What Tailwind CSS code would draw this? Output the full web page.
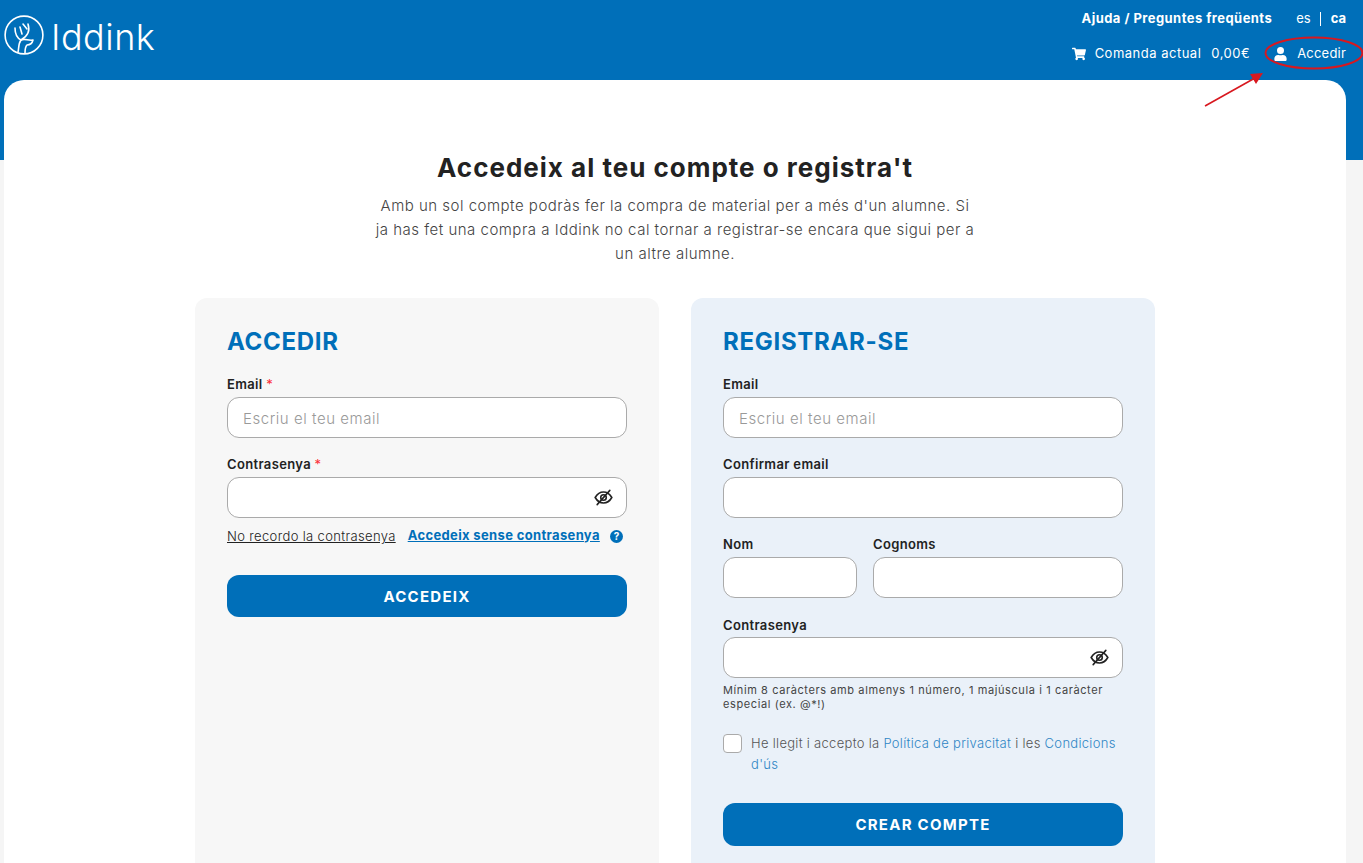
<!DOCTYPE html>
<html lang="ca">
<head>
  <meta charset="UTF-8" />
  <title>Accedir | Iddink</title>
  <meta name="viewport" content="width=device-width, initial-scale=1.0" />
  <script src="https://cdn.jsdelivr.net/npm/@tailwindcss/browser@4"></script>
</head>
<body class="h-[863px] overflow-hidden font-['Inter','Liberation_Sans',sans-serif] text-[#222] bg-[linear-gradient(#006fb9_160px,#f5f5f5_160px)]">

  <!-- Header -->
  <header class="relative h-[80px] flex justify-between text-white pl-[4px] pr-[17px]">
    <a href="#" class="flex items-center h-[70px] gap-[7px]">
      <svg width="40" height="40" viewBox="0 0 40 40" fill="none" stroke="white" stroke-width="1.6" stroke-linecap="round" stroke-linejoin="round">
        <circle cx="20" cy="20" r="18.9" />
        <path d="M11 13C11 19 13 23 17 25M16 12 18 19M24 9C26 15 24 21 17 25M19 9 23 14" />
        <path d="M17 25C21 23 24 26 29 25 28 29 25 30 23 30 21 32 21 35 21 38" />
        <path d="M17 25C14 29 15 34 14 37" />
      </svg>
      <span class="mt-[4px] text-[36px] leading-none font-light tracking-[0.5px]">Iddink</span>
    </a>
    <div class="flex flex-col items-end">
      <div class="flex items-center h-[18px] mt-[10px] text-[13px]">
        <a href="#" class="font-bold tracking-[0.45px]">Ajuda / Preguntes freqüents</a>
        <a href="#" class="ml-[24px]">es</a>
        <span class="w-px h-[14px] bg-white ml-[9px] mr-[10px]"></span>
        <a href="#" class="font-bold">ca</a>
      </div>
      <div class="flex items-center mt-[17px] text-[13px] h-[18px] tracking-[0.5px]">
        <svg width="14" height="14" viewBox="0 0 576 512" fill="white"><path d="M528 301 575 93c3-15-8-29-23-29H159l-9-45C148 8 138 0 127 0H24C11 0 0 11 0 24v16c0 13 11 24 24 24h70l70 343c-17 10-28 28-28 49 0 31 25 56 56 56s56-25 56-56c0-16-6-30-17-40h210c-11 10-17 24-17 40 0 31 25 56 56 56s56-25 56-56c0-22-13-41-32-50l5-24c4-15-8-29-23-29H212l-6-32h299c11 0 21-8 23-19z"/></svg>
        <span class="ml-[9px]">Comanda actual</span>
        <span class="ml-[10px]">0,00€</span>
        <svg class="ml-[24px]" width="13" height="14" viewBox="0 0 448 512" fill="white"><path d="M224 256a128 128 0 1 0 0-256 128 128 0 0 0 0 256zm90 32h-17a174 174 0 0 1-146 0h-17C60 288 0 348 0 422v42c0 27 21 48 48 48h352c27 0 48-21 48-48v-42c0-74-60-134-134-134z"/></svg>
        <span class="ml-[10px] tracking-[0.2px]">Accedir</span>
      </div>
    </div>
  </header>

  <!-- Main card -->
  <main class="ml-[4px] mr-[17px] h-[783px] bg-white rounded-t-[20px] flex flex-col items-center overflow-hidden">
    <h1 class="mt-[70px] text-[26px] leading-[36px] font-bold tracking-[1px]">Accedeix al teu compte o registra't</h1>
    <p class="mt-[8px] w-[605px] text-center text-[15px] leading-[24px] text-[#444] font-light tracking-[0.5px]">Amb un sol compte podràs fer la compra de material per a més d'un alumne. Si ja has fet una compra a Iddink no cal tornar a registrar-se encara que sigui per a un altre alumne.</p>

    <div class="mt-[32px] flex gap-[32px]">
      <!-- Login -->
      <section class="w-[464px] h-[600px] rounded-t-[12px] bg-[#f7f7f7] p-[32px]">
        <h2 class="text-[24px] leading-[24px] font-bold tracking-[0.7px] text-[#006fb9]">ACCEDIR</h2>
        <label class="block mt-[21px] text-[13px] leading-[18px] font-semibold tracking-[0.35px]">Email <span class="text-red-500 font-normal">*</span></label>
        <input type="text" placeholder="Escriu el teu email" class="block mt-[4px] w-full h-[41px] px-[15px] pt-[2px] bg-white border border-[#aaa] rounded-[12px] text-[15px] font-light tracking-[0.55px] placeholder:text-[#999]" />
        <label class="block mt-[17px] text-[13px] leading-[18px] font-semibold tracking-[0.35px]">Contrasenya <span class="text-red-500 font-normal">*</span></label>
        <div class="relative mt-[4px]">
          <input type="password" class="block w-full h-[41px] px-[15px] bg-white border border-[#aaa] rounded-[12px]" />
          <svg class="absolute right-[14px] top-[11px]" width="19" height="19" viewBox="0 0 24 24" fill="none" stroke="#222" stroke-width="2" stroke-linecap="round"><path d="M1.5 12S5.5 5 12 5s10.5 7 10.5 7-4 7-10.5 7S1.5 12 1.5 12z" /><circle cx="12" cy="12" r="3.5" /><path d="M4 21 20 3" /></svg>
        </div>
        <div class="flex items-center mt-[8px] h-[22px]">
          <a href="#" class="text-[13px] underline font-light tracking-[0.35px]">No recordo la contrasenya</a>
          <a href="#" class="ml-[12px] text-[13px] font-bold text-[#006fb9] underline -mt-[3px] tracking-[0.35px]">Accedeix sense contrasenya</a>
          <svg class="ml-[10px] -mt-[1px]" width="13" height="13" viewBox="0 0 13 13"><circle cx="6.5" cy="6.5" r="6.5" fill="#006fb9" /><text x="6.5" y="10" text-anchor="middle" font-size="10" font-weight="700" fill="white">?</text></svg>
        </div>
        <button class="mt-[27px] w-full h-[42px] pt-[2px] rounded-[12px] bg-[#006fb9] text-white text-[15px] font-bold tracking-[1.25px]">ACCEDEIX</button>
      </section>

      <!-- Register -->
      <section class="w-[464px] h-[600px] rounded-t-[12px] bg-[#eaf1f9] p-[32px]">
        <h2 class="text-[24px] leading-[24px] font-bold tracking-[0.7px] text-[#006fb9]">REGISTRAR-SE</h2>
        <label class="block mt-[21px] text-[13px] leading-[18px] font-semibold tracking-[0.35px]">Email</label>
        <input type="text" placeholder="Escriu el teu email" class="block mt-[4px] w-full h-[41px] px-[15px] pt-[2px] bg-white border border-[#aaa] rounded-[12px] text-[15px] font-light tracking-[0.55px] placeholder:text-[#999]" />
        <label class="block mt-[17px] text-[13px] leading-[18px] font-semibold tracking-[0.35px]">Confirmar email</label>
        <input type="text" class="block mt-[4px] w-full h-[41px] px-[15px] bg-white border border-[#aaa] rounded-[12px]" />
        <div class="flex gap-[16px] mt-[17px]">
          <div class="w-[134px]">
            <label class="block text-[13px] leading-[18px] font-semibold tracking-[0.35px]">Nom</label>
            <input type="text" class="block mt-[4px] w-full h-[41px] px-[15px] bg-white border border-[#aaa] rounded-[12px]" />
          </div>
          <div class="flex-1">
            <label class="block text-[13px] leading-[18px] font-semibold tracking-[0.35px]">Cognoms</label>
            <input type="text" class="block mt-[4px] w-full h-[41px] px-[15px] bg-white border border-[#aaa] rounded-[12px]" />
          </div>
        </div>
        <label class="block mt-[18px] text-[13px] leading-[18px] font-semibold tracking-[0.35px]">Contrasenya</label>
        <div class="relative mt-[3px]">
          <input type="password" class="block w-full h-[41px] px-[15px] bg-white border border-[#aaa] rounded-[12px]" />
          <svg class="absolute right-[14px] top-[11px]" width="19" height="19" viewBox="0 0 24 24" fill="none" stroke="#222" stroke-width="2" stroke-linecap="round"><path d="M1.5 12S5.5 5 12 5s10.5 7 10.5 7-4 7-10.5 7S1.5 12 1.5 12z" /><circle cx="12" cy="12" r="3.5" /><path d="M4 21 20 3" /></svg>
        </div>
        <p class="mt-[5px] text-[11px] leading-[14px] text-[#444] tracking-[0.6px]">Mínim 8 caràcters amb almenys 1 número, 1 majúscula i 1 caràcter especial (ex. @*!)</p>
        <div class="flex mt-[22px]">
          <span class="w-[19px] h-[19px] mt-[1px] shrink-0 bg-white border border-[#aaa] rounded-[4px]"></span>
          <p class="ml-[9px] text-[13px] leading-[21px] text-[#555] font-light tracking-[0.3px]">He llegit i accepto la <a href="#" class="text-[#2f86c5]">Política de privacitat</a> i les <a href="#" class="text-[#2f86c5]">Condicions d'ús</a></p>
        </div>
        <button class="mt-[28px] w-full h-[43px] pt-[2px] rounded-[12px] bg-[#006fb9] text-white text-[15px] font-bold tracking-[1.25px]">CREAR COMPTE</button>
      </section>
    </div>
  </main>

  <!-- Red annotation drawn over the screenshot -->
  <svg class="absolute top-0 left-0 pointer-events-none" width="1363" height="110" fill="none">
    <ellipse cx="1314" cy="53" rx="48.5" ry="15.5" stroke="#d8181f" stroke-width="2" />
    <path d="M1205 106 1255 78" stroke="#d8181f" stroke-width="1.6" />
    <path d="M1263 73 1250 74 1256 84z" fill="#d8181f" />
  </svg>

</body>
</html>
